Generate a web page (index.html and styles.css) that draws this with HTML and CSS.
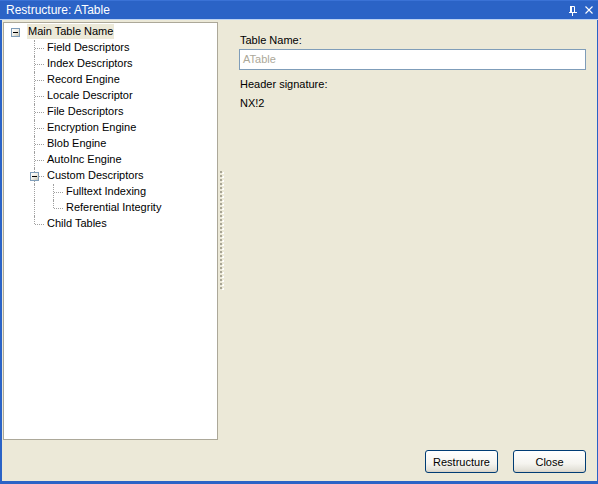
FILE: index.html
```html
<!DOCTYPE html>
<html>
<head>
<meta charset="utf-8">
<link rel="stylesheet" href="styles.css">
</head>
<body>
<div class="window">
  <div class="titlebar">
    <span class="title">Restructure: ATable</span>
    <span class="tb-icons">
      <svg class="pin" width="8" height="10" viewBox="0 0 8 10">
        <path d="M1.5 0.5h4v6h-4z" fill="none" stroke="#fff" stroke-width="1"/>
        <rect x="1" y="0" width="2" height="7" fill="#fff"/>
        <rect x="0" y="6" width="8" height="1" fill="#fff"/>
        <rect x="3" y="7" width="1" height="3" fill="#fff"/>
      </svg>
      <svg class="close" width="8" height="8" viewBox="0 0 8 8">
        <path d="M0.5 0.5L7.5 7.5M7.5 0.5L0.5 7.5" stroke="#fff" stroke-width="1.1"/>
      </svg>
    </span>
  </div>
  <div class="body">
    <div class="main">
      <div class="tree">
        <div class="row">
          <span class="cell"><span class="box"></span></span>
          <span class="label sel">Main Table Name</span>
        </div>
        <div class="row"><span class="cell"></span><span class="cell tee"></span><span class="label">Field Descriptors</span></div>
        <div class="row"><span class="cell"></span><span class="cell tee"></span><span class="label">Index Descriptors</span></div>
        <div class="row"><span class="cell"></span><span class="cell tee"></span><span class="label">Record Engine</span></div>
        <div class="row"><span class="cell"></span><span class="cell tee"></span><span class="label">Locale Descriptor</span></div>
        <div class="row"><span class="cell"></span><span class="cell tee"></span><span class="label">File Descriptors</span></div>
        <div class="row"><span class="cell"></span><span class="cell tee"></span><span class="label">Encryption Engine</span></div>
        <div class="row"><span class="cell"></span><span class="cell tee"></span><span class="label">Blob Engine</span></div>
        <div class="row"><span class="cell"></span><span class="cell tee"></span><span class="label">AutoInc Engine</span></div>
        <div class="row"><span class="cell"></span><span class="cell tee"><span class="box"></span></span><span class="label">Custom Descriptors</span></div>
        <div class="row"><span class="cell"></span><span class="cell vline"></span><span class="cell tee"></span><span class="label">Fulltext Indexing</span></div>
        <div class="row"><span class="cell"></span><span class="cell vline"></span><span class="cell elbow"></span><span class="label">Referential Integrity</span></div>
        <div class="row"><span class="cell"></span><span class="cell elbow"></span><span class="label">Child Tables</span></div>
      </div>
      <div class="splitter">
        <svg class="grip" width="6" height="120" viewBox="0 0 6 120">
          <defs>
            <pattern id="g" width="6" height="4" patternUnits="userSpaceOnUse">
              <rect x="0" y="0" width="2" height="2" fill="#a8a594"/>
              <rect x="2" y="2" width="2" height="1" fill="#ffffff"/>
              <rect x="3" y="1" width="1" height="1" fill="#ffffff"/>
            </pattern>
          </defs>
          <rect width="6" height="120" fill="url(#g)"/>
        </svg>
      </div>
      <div class="form">
        <div class="lbl">Table Name:</div>
        <div class="input">ATable</div>
        <div class="lbl sig">Header signature:</div>
        <div class="lbl val">NX!2</div>
      </div>
    </div>
    <div class="footer">
      <button class="btn">Restructure</button>
      <button class="btn">Close</button>
    </div>
  </div>
</div>
</body>
</html>
```

FILE: styles.css
```css
html, body {
  margin: 0;
  padding: 0;
  background: #ece9d8;
}
.window {
  width: 598px;
  height: 484px;
  box-sizing: border-box;
  display: flex;
  flex-direction: column;
  background: #ece9d8;
  border-left: 2px solid #2b63c6;
  border-right: 1px solid #2b63c6;
  border-bottom: 3px solid #2b63c6;
  font-family: "Liberation Sans", Arial, sans-serif;
  font-size: 11px;
  color: #000;
}
.titlebar {
  height: 19px;
  margin-left: -2px;
  margin-right: -1px;
  background: #2b63c6;
  border-top: 1px solid #3a72d6;
  box-sizing: border-box;
  display: flex;
  align-items: center;
  justify-content: space-between;
  padding: 0 5px 0 6px;
  box-shadow: 0 1px 0 #bcd2f2;
}
.title {
  color: #fff;
  font-size: 12px;
}
.tb-icons {
  display: flex;
  align-items: center;
  gap: 8px;
}
.pin { display: block; margin-top: 1px; }
.close { display: block; }
.body {
  flex: 1;
  display: flex;
  flex-direction: column;
  padding: 3px 11px 8px 1px;
}
.main {
  display: flex;
  height: 418px;
}
.tree {
  width: 215px;
  height: 418px;
  box-sizing: border-box;
  background: #fff;
  border: 1px solid #aca899;
  padding: 1px 0 0 2px;
}
.row {
  height: 16px;
  display: flex;
  align-items: stretch;
}
.cell {
  width: 19px;
  flex: none;
  position: relative;
}
.tee::before, .vline::before, .elbow::before {
  content: "";
  position: absolute;
  left: 9px;
  top: 0;
  bottom: 0;
  border-left: 1px dotted #a0a0a0;
}
.elbow::before { bottom: 8px; }
.tee::after, .elbow::after {
  content: "";
  position: absolute;
  left: 10px;
  width: 9px;
  top: 8px;
  border-top: 1px dotted #a0a0a0;
}
.box {
  position: absolute;
  left: 5px;
  top: 4px;
  width: 7px;
  height: 7px;
  border: 1px solid #7f9db9;
  background: linear-gradient(135deg, #ffffff 0%, #f0eee6 50%, #c5c2b2 100%);
  z-index: 1;
}
.box::after {
  content: "";
  position: absolute;
  left: 1px;
  top: 3px;
  width: 5px;
  height: 1px;
  background: #000;
}
.label {
  margin-left: 2px;
  padding: 0 1px;
  line-height: 15px;
  height: 15px;
  white-space: nowrap;
}
.label.sel {
  background: #ece9d8;
}
.splitter {
  width: 21px;
  display: flex;
  align-items: center;
}
.grip {
  display: block;
  margin-left: 2px;
}
.form {
  width: 347px;
  display: flex;
  flex-direction: column;
  padding-top: 11px;
}
.lbl {
  height: 15px;
  line-height: 15px;
  padding-left: 1px;
}
.input {
  margin-top: 1px;
  height: 21px;
  box-sizing: border-box;
  border: 1px solid #7f9db9;
  background: #fff;
  color: #aca899;
  line-height: 19px;
  padding-left: 3px;
}
.sig { margin-top: 7px; }
.val { margin-top: 4px; }
.footer {
  margin-top: 10px;
  display: flex;
  justify-content: flex-end;
  gap: 15px;
}
.btn {
  width: 73px;
  height: 23px;
  box-sizing: border-box;
  border: 1px solid #003c74;
  border-radius: 3px;
  background: linear-gradient(180deg, #ffffff 0%, #f5f4ef 60%, #e3e1d8 90%, #d6d0c5 100%);
  font-family: "Liberation Sans", Arial, sans-serif;
  font-size: 11px;
  color: #000;
  padding: 0;
  margin: 0;
}
```
